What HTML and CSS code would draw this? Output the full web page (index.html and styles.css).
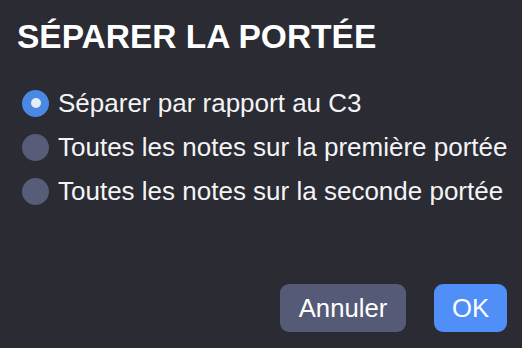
FILE: index.html
```html
<!DOCTYPE html>
<html lang="fr">
<head>
    <meta charset="UTF-8">
    <meta name="viewport" content="width=device-width, initial-scale=1.0">
    <title>Séparer la portée</title>
    <link rel="stylesheet" href="styles.css">
</head>
<body>
    <div class="dialog">
        <h1 class="title">SÉPARER LA PORTÉE</h1>

        <div class="options">
            <label class="option">
                <span class="radio checked"></span>
                <span class="option-label">Séparer par rapport au C3</span>
            </label>
            <label class="option">
                <span class="radio"></span>
                <span class="option-label">Toutes les notes sur la première portée</span>
            </label>
            <label class="option">
                <span class="radio"></span>
                <span class="option-label">Toutes les notes sur la seconde portée</span>
            </label>
        </div>

        <div class="actions">
            <button class="btn cancel">Annuler</button>
            <button class="btn ok">OK</button>
        </div>
    </div>
</body>
</html>
```

FILE: styles.css
```css
body {
    margin: 0;
    background-color: #2a2b33;
    color: #ffffff;
    font-family: "Liberation Sans", Arial, sans-serif;
}

.dialog {
    display: flex;
    flex-direction: column;
    height: 348px;
    padding: 20px 15px 16px 17px;
    box-sizing: border-box;
}

.title {
    margin: 0;
    font-size: 33.5px;
    line-height: 33px;
    font-weight: bold;
}

.options {
    margin-top: 28px;
    display: flex;
    flex-direction: column;
}

.option {
    display: flex;
    align-items: center;
    height: 44px;
    padding-left: 5px;
    font-size: 26px;
    color: #f4f4f6;
    white-space: nowrap;
}

.radio {
    position: relative;
    width: 27px;
    height: 27px;
    border-radius: 50%;
    background-color: #575c78;
    margin-right: 9px;
    flex-shrink: 0;
}

.radio.checked {
    background-color: #4a89e3;
}

.radio.checked::after {
    content: "";
    position: absolute;
    top: 8.5px;
    left: 8.5px;
    width: 10px;
    height: 10px;
    border-radius: 50%;
    background-color: #e6ecf8;
}

.actions {
    margin-top: auto;
    display: flex;
    justify-content: flex-end;
    gap: 28px;
}

.btn {
    height: 48px;
    border: none;
    border-radius: 9px;
    font-family: "Liberation Sans", Arial, sans-serif;
    font-size: 25.7px;
    color: #ffffff;
    padding: 0 18px;
}

.btn.cancel {
    width: 126px;
    background-color: #555b76;
}

.btn.ok {
    width: 73px;
    background-color: #4f8ff7;
}
```
